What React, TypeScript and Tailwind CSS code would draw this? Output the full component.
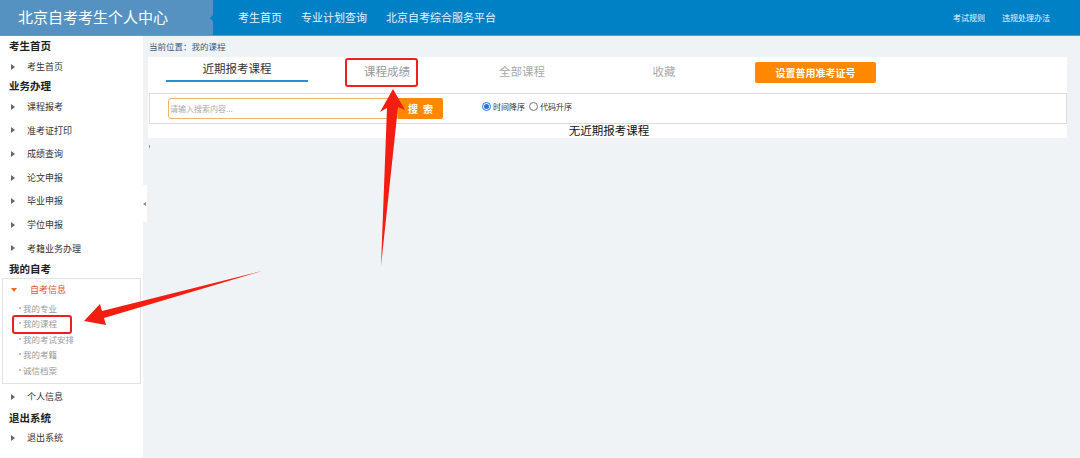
import React from 'react'

const font = { fontFamily: '"Noto Sans CJK SC", "Noto Sans", sans-serif' }

function Caret() {
  return <span className="inline-block w-0 h-0 border-y-[3px] border-y-transparent border-l-[4px] border-l-[#666] mr-[12px] ml-[11px]" />
}

function NavItem({ label, h = 'h-[23.6px]' }: { label: string; h?: string }) {
  return (
    <div className={`flex items-center ${h} text-[9px] text-[#333]`}>
      <Caret />
      <span>{label}</span>
    </div>
  )
}

function Heading({ label }: { label: string }) {
  return <div className="h-[18px] flex items-center pl-[9px] text-[10.5px] font-bold text-[#222]">{label}</div>
}

const subItems = ['我的专业', '我的课程', '我的考试安排', '我的考籍', '诚信档案']

function Sidebar() {
  return (
    <aside className="relative w-[143px] shrink-0 bg-white">
      <div className="h-[20px] flex items-center pl-[9px] text-[10.5px] font-bold text-[#222]">考生首页</div>
      <NavItem label="考生首页" h="h-[21px]" />
      <Heading label="业务办理" />
      {['课程报考', '准考证打印', '成绩查询', '论文申报', '毕业申报', '学位申报', '考籍业务办理'].map(l => (
        <NavItem key={l} label={l} />
      ))}
      <Heading label="我的自考" />
      <div className="mx-[2px] border border-[#e2e2e2] pb-[5px]">
        <div className="h-[21px] flex items-center text-[9px] text-[#e8502e]">
          <span className="inline-block w-0 h-0 border-x-[3px] border-x-transparent border-t-[4px] border-t-[#f06a20] ml-[8px] mr-[13px]" />
          <span>自考信息</span>
        </div>
        {subItems.map(s => (
          <div key={s} className="relative h-[15.5px] flex items-center pl-[16px] text-[8.5px] text-[#9a9a9a]">
            <span className="w-[2px] h-[2px] rounded-full bg-[#aaa] mr-[2px]" />
            <span>{s}</span>
            {s === '我的课程' && (
              <span className="absolute left-[9px] top-[-1px] w-[60px] h-[19px] border-2 border-[#f01e1e] rounded-[3px]" />
            )}
          </div>
        ))}
      </div>
      <div className="mt-[2px]">
        <NavItem label="个人信息" h="h-[23px]" />
      </div>
      <Heading label="退出系统" />
      <NavItem label="退出系统" h="h-[22px]" />
      <div className="absolute right-[-4px] top-[149px] w-[4px] h-[37px] bg-white flex items-center">
        <span className="w-0 h-0 border-y-[2px] border-y-transparent border-r-[3px] border-r-[#888]" />
      </div>
    </aside>
  )
}

function Tabs() {
  return (
    <div className="flex items-start h-[31px]">
      <div className="ml-[18px] w-[142px] shrink-0 h-[25px] flex items-center justify-center border-b-2 border-[#2a8fcf] text-[11.5px] text-[#333]">
        近期报考课程
      </div>
      <div className="relative ml-[29px] w-[100px] h-[29px] flex items-center justify-center text-[11.5px] text-[#999]">
        课程成绩
        <span className="absolute left-[8px] top-[1px] w-[73px] h-[29px] border-2 border-[#f01e1e] rounded-[3px]" />
      </div>
      <div className="ml-[35px] w-[100px] h-[29px] flex items-center justify-center text-[11.5px] text-[#aaa]">全部课程</div>
      <div className="ml-[42px] w-[100px] h-[29px] flex items-center justify-center text-[11.5px] text-[#aaa]">收藏</div>
      <button className="ml-[41px] mt-[5px] w-[121px] h-[21px] rounded-[2px] bg-[#ff8800] text-white text-[10px] font-bold">
        设置普用准考证号
      </button>
    </div>
  )
}

function Radio({ on, label }: { on?: boolean; label: string }) {
  return (
    <label className="flex items-center gap-[2px] text-[8px] text-[#333]">
      <span className={`w-[9px] h-[9px] rounded-full border flex items-center justify-center bg-white ${on ? 'border-[#1a73e8]' : 'border-[#777]'}`}>
        {on && <span className="w-[5px] h-[5px] rounded-full bg-[#1a73e8]" />}
      </span>
      {label}
    </label>
  )
}

function Main() {
  return (
    <main className="flex-1 bg-[#eff3f5] pl-[5px] pr-[13px]">
      <div className="h-[21px] flex items-center pl-[1px] text-[8.5px] text-[#3b5b7b]">当前位置：我的课程</div>
      <section className="bg-white">
        <Tabs />
        <div className="ml-[1px] mt-[5px] h-[31px] border border-[#dddddd] flex items-center">
          <div className="ml-[18px] flex h-[21px]">
            <div className="w-[230px] h-full border border-[#f5b36a] rounded-l-[3px] flex items-center pl-[1px] text-[8px] text-[#aaa]">
              请输入搜索内容...
            </div>
            <button className="w-[45px] h-full bg-[#ff8800] rounded-r-[2px] text-white text-[10px] font-bold tracking-[5px] pl-[5px]">搜索</button>
          </div>
          <div className="ml-[39px] flex items-center gap-[4px] mt-[-4px]">
            <Radio on label="时间降序" />
            <Radio label="代码升序" />
          </div>
        </div>
        <div className="h-[14px] flex items-center justify-center text-[11.5px] text-[#111] pl-[3px]">无近期报考课程</div>
      </section>
      <div className="w-[1px] h-[3px] bg-[#999] mt-[7px] ml-[1px]" />
    </main>
  )
}

export default function App() {
  return (
    <div className="relative w-[1080px] h-[458px] overflow-hidden bg-[#eff3f5]" style={font}>
      <header className="h-[36px] flex bg-[#0081c6] border-b border-[#4aa3d6]">
        <div className="relative w-[213px] bg-[#5592c1] flex items-center pl-[18px] text-[15px] text-white">
          北京自考考生个人中心
          <span className="absolute right-0 top-[15px] w-0 h-0 border-y-[3px] border-y-transparent border-r-[3px] border-r-[#0081c6]" />
        </div>
        <nav className="flex items-center ml-[25px] gap-[19px] text-[11px] text-[#e6f2fa]">
          <span>考生首页</span>
          <span>专业计划查询</span>
          <span>北京自考综合服务平台</span>
        </nav>
        <div className="ml-auto mr-[30px] flex items-center gap-[17px] text-[8px] text-[#eef6fb]">
          <span>考试规则</span>
          <span>违规处理办法</span>
        </div>
      </header>
      <div className="flex h-[422px]">
        <Sidebar />
        <Main />
      </div>
      <svg className="absolute inset-0 pointer-events-none" width="1080" height="458" viewBox="0 0 1080 458">
        <polygon points="393,89 405,110 398,107 381,266 387,108 380,112" fill="#f41d12" />
        <polygon points="84,321 100,304 102,311 262,271 104,318 106,325" fill="#f41d12" />
      </svg>
    </div>
  )
}
